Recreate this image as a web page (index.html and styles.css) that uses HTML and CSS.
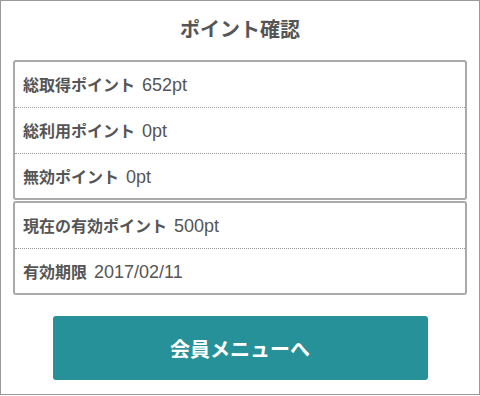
FILE: index.html
```html
<!DOCTYPE html>
<html lang="ja">
<head>
<meta charset="utf-8">
<title>ポイント確認</title>
<link rel="stylesheet" href="styles.css">
</head>
<body>
<div class="frame">
  <h1 class="title">ポイント確認</h1>
  <div class="box">
    <div class="row"><span class="label">総取得ポイント</span><span class="value">652pt</span></div>
    <div class="row"><span class="label">総利用ポイント</span><span class="value">0pt</span></div>
    <div class="row"><span class="label">無効ポイント</span><span class="value">0pt</span></div>
  </div>
  <div class="box box-second">
    <div class="row"><span class="label">現在の有効ポイント</span><span class="value">500pt</span></div>
    <div class="row"><span class="label">有効期限</span><span class="value">2017/02/11</span></div>
  </div>
  <div class="actions">
    <a class="button" href="#">会員メニューへ</a>
  </div>
</div>
</body>
</html>
```
FILE: styles.css
```css
html, body {
  margin: 0;
  padding: 0;
  background: #fff;
}
body {
  font-family: "Noto Sans CJK JP", "Noto Sans", sans-serif;
  color: #555;
}
.frame {
  box-sizing: border-box;
  width: 480px;
  height: 395px;
  border: 1px solid #999;
  padding: 0 12px;
}
.title {
  margin: 0;
  height: 59px;
  line-height: 56px;
  font-size: 20px;
  font-weight: bold;
  text-align: center;
  color: #555;
}
.box {
  border: 2px solid #aaa;
  border-radius: 3px;
}
.box-second {
  margin-top: 1px;
}
.row {
  height: 45px;
  line-height: 44px;
  padding-left: 8px;
  font-size: 16px;
  white-space: nowrap;
}
.row + .row {
  border-top: 1px dotted #999;
}
.row:last-child {
  height: 44px;
}
.label {
  font-weight: bold;
  color: #555;
}
.value {
  margin-left: 7px;
  font-family: "Liberation Sans", Arial, sans-serif;
  font-size: 18px;
  font-weight: normal;
  color: #555;
}
.actions {
  display: flex;
  justify-content: center;
  margin-top: 21px;
}
.button {
  width: 375px;
  height: 64px;
  display: flex;
  align-items: center;
  justify-content: center;
  background: #27919a;
  color: #fff;
  border-radius: 3px;
  font-size: 20px;
  font-weight: bold;
  text-decoration: none;
}
```
